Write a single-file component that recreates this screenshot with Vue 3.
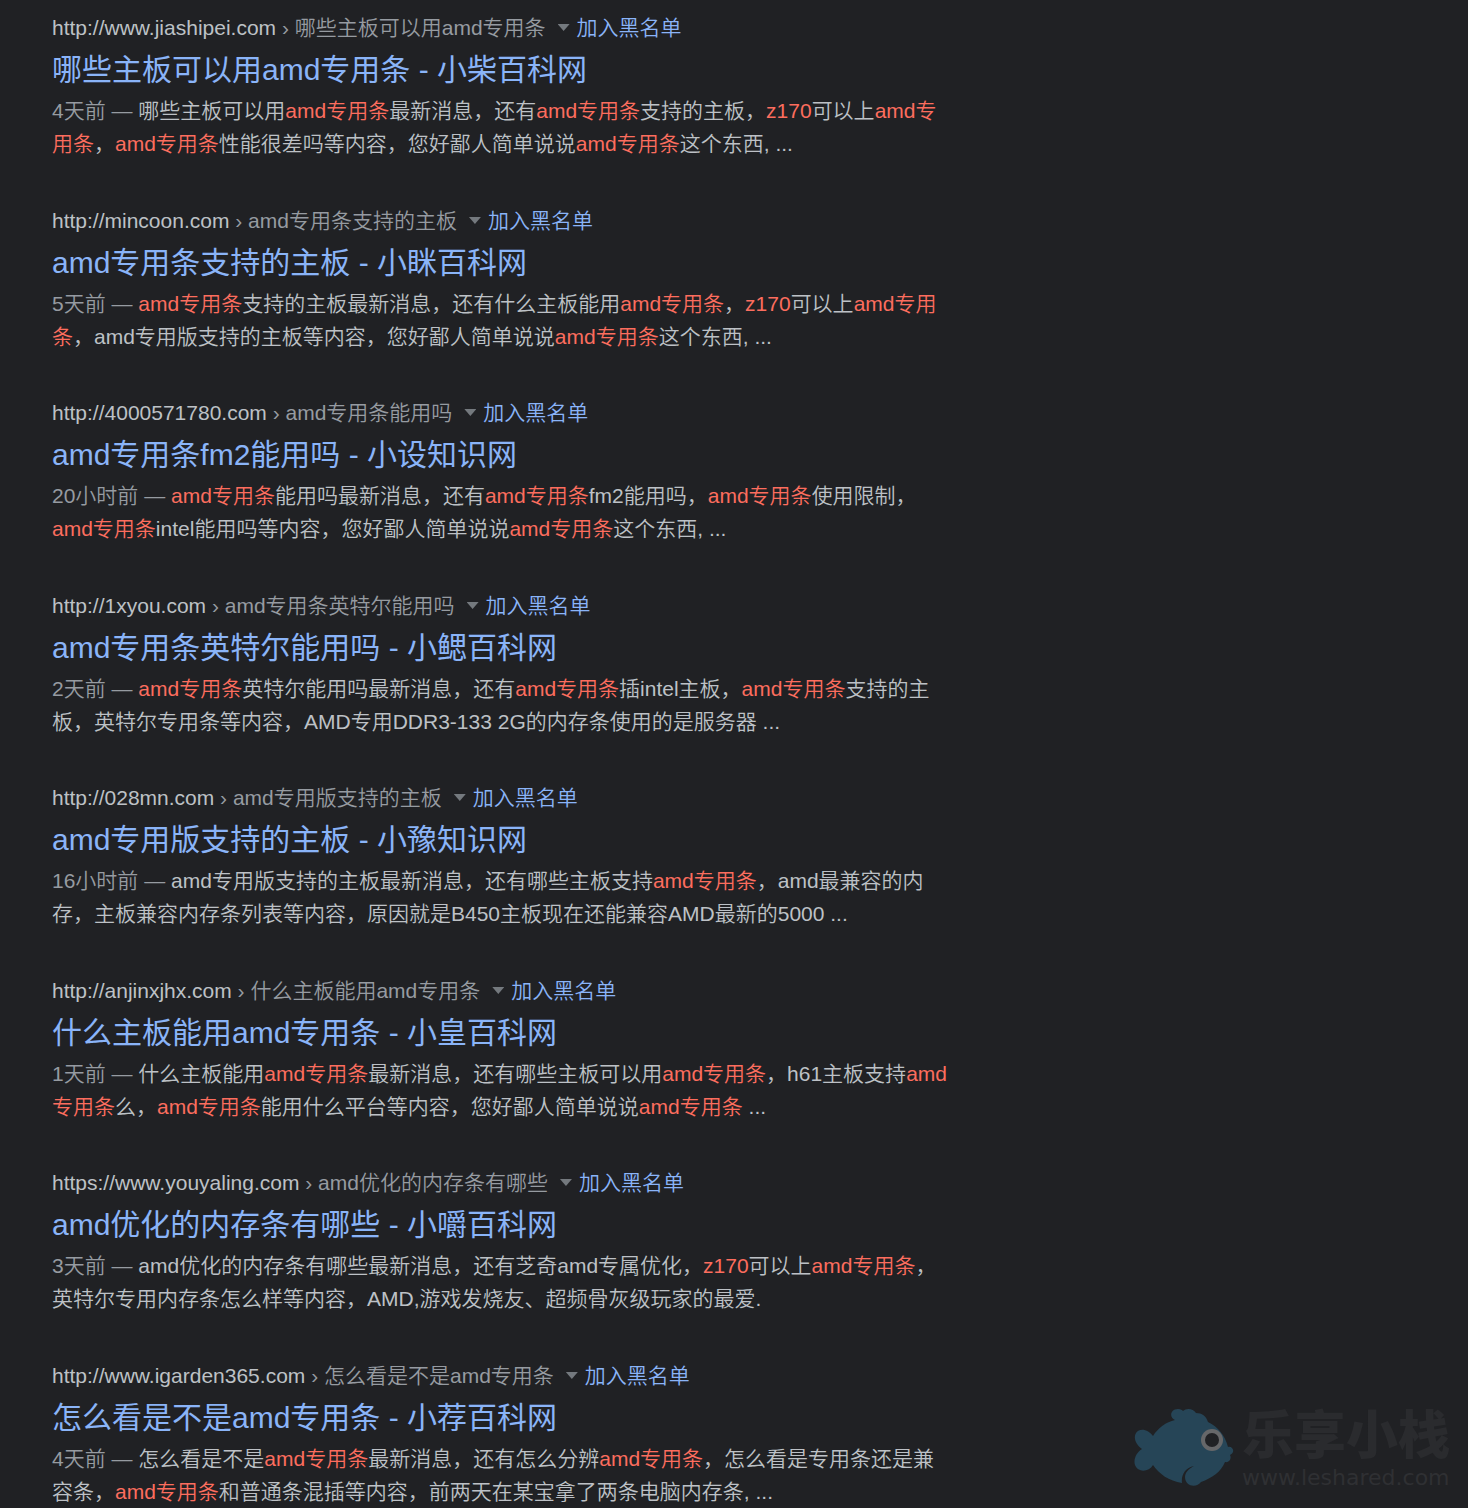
<script setup>
const results = [
  {
    site: 'http://www.jiashipei.com',
    crumb: '哪些主板可以用amd专用条',
    title: '哪些主板可以用amd专用条 - 小柴百科网',
    age: '4天前',
    text: '哪些主板可以用*amd专用条*最新消息，还有*amd专用条*支持的主板，*z170*可以上*amd专用条*，*amd专用条*性能很差吗等内容，您好鄙人简单说说*amd专用条*这个东西, ...'
  },
  {
    site: 'http://mincoon.com',
    crumb: 'amd专用条支持的主板',
    title: 'amd专用条支持的主板 - 小眯百科网',
    age: '5天前',
    text: '*amd专用条*支持的主板最新消息，还有什么主板能用*amd专用条*，*z170*可以上*amd专用条*，amd专用版支持的主板等内容，您好鄙人简单说说*amd专用条*这个东西, ...'
  },
  {
    site: 'http://4000571780.com',
    crumb: 'amd专用条能用吗',
    title: 'amd专用条fm2能用吗 - 小设知识网',
    age: '20小时前',
    text: '*amd专用条*能用吗最新消息，还有*amd专用条*fm2能用吗，*amd专用条*使用限制，*amd专用条*intel能用吗等内容，您好鄙人简单说说*amd专用条*这个东西, ...'
  },
  {
    site: 'http://1xyou.com',
    crumb: 'amd专用条英特尔能用吗',
    title: 'amd专用条英特尔能用吗 - 小鳃百科网',
    age: '2天前',
    text: '*amd专用条*英特尔能用吗最新消息，还有*amd专用条*插intel主板，*amd专用条*支持的主板，英特尔专用条等内容，AMD专用DDR3-133 2G的内存条使用的是服务器 ...'
  },
  {
    site: 'http://028mn.com',
    crumb: 'amd专用版支持的主板',
    title: 'amd专用版支持的主板 - 小豫知识网',
    age: '16小时前',
    text: 'amd专用版支持的主板最新消息，还有哪些主板支持*amd专用条*，amd最兼容的内存，主板兼容内存条列表等内容，原因就是B450主板现在还能兼容AMD最新的5000 ...'
  },
  {
    site: 'http://anjinxjhx.com',
    crumb: '什么主板能用amd专用条',
    title: '什么主板能用amd专用条 - 小皇百科网',
    age: '1天前',
    text: '什么主板能用*amd专用条*最新消息，还有哪些主板可以用*amd专用条*，h61主板支持*amd专用条*么，*amd专用条*能用什么平台等内容，您好鄙人简单说说*amd专用条* ...'
  },
  {
    site: 'https://www.youyaling.com',
    crumb: 'amd优化的内存条有哪些',
    title: 'amd优化的内存条有哪些 - 小嚼百科网',
    age: '3天前',
    text: 'amd优化的内存条有哪些最新消息，还有芝奇amd专属优化，*z170*可以上*amd专用条*，英特尔专用内存条怎么样等内容，AMD,游戏发烧友、超频骨灰级玩家的最爱.'
  },
  {
    site: 'http://www.igarden365.com',
    crumb: '怎么看是不是amd专用条',
    title: '怎么看是不是amd专用条 - 小荐百科网',
    age: '4天前',
    text: '怎么看是不是*amd专用条*最新消息，还有怎么分辨*amd专用条*，怎么看是专用条还是兼容条，*amd专用条*和普通条混插等内容，前两天在某宝拿了两条电脑内存条, ...'
  }
]

// Odd segments between asterisks are the highlighted search terms.
const segments = (text) => text.split('*')
</script>

<template>
  <main class="page" lang="zh-CN">
    <article v-for="r in results" :key="r.site" class="result">
      <div class="source">
        <cite class="cite">{{ r.site }}<span class="crumb"> › {{ r.crumb }}</span></cite>
        <button class="more" type="button" aria-label="更多选项"></button>
        <a class="block" href="#">加入黑名单</a>
      </div>
      <h3 class="title"><a href="#">{{ r.title }}</a></h3>
      <p class="snippet"><span class="age">{{ r.age }} — </span><template v-for="(s, i) in segments(r.text)" :key="i"><em v-if="i % 2">{{ s }}</em><template v-else>{{ s }}</template></template></p>
    </article>

    <aside class="brand">
      <svg class="fish" width="100" height="80" viewBox="0 0 100 80" aria-hidden="true">
        <g fill="#264557">
          <path d="M19 28C24 20 32 14 41 12C35 10 36 1 44 1C47 1 48 2 49 3C52 0 59 0 62 5C68 5 72 8 74 14C84 19 91 27 94 39C97 38 100 41 99 44C98 46 97 46 96 47C98 51 95 55 91 54C87 64 78 70 67 74C63 80 51 79 51 69C51 65 54 61 60 58C51 60 47 67 48 75C35 73 25 66 19 57C15 64 4 65 1 57C-1 51 3 44 8 41C2 37 -1 30 2 25C6 19 15 22 19 28Z" />
        </g>
        <circle cx="78" cy="32" r="11" fill="#666769" />
        <circle cx="78" cy="32" r="7" fill="#202124" />
      </svg>
      <div class="words">
        <span class="name">乐享小栈</span>
        <span class="domain">www.leshared.com</span>
      </div>
    </aside>
  </main>
</template>

<style>
body {
  margin: 0;
  background: #202124;
}
</style>

<style scoped>
.page {
  position: relative;
  padding: 11px 52px 0;
  color: #bdc1c6;
  background: #202124;
  font-family: "Liberation Sans", "Noto Sans CJK SC", sans-serif;
  font-size: 21px;
  font-weight: 350;
  line-height: 33px;
}
.result {
  max-width: 900px;
  margin-bottom: 44px;
}
.result:nth-child(even) {
  margin-bottom: 43px;
}
.result:nth-last-child(2) {
  margin-bottom: 0;
}
.source {
  display: flex;
  align-items: center;
  height: 33px;
  padding-bottom: 1px;
  white-space: nowrap;
}
.cite {
  font-style: normal;
}
.crumb,
.age {
  color: #969ba1;
}
.more {
  width: 12px;
  height: 7px;
  margin: 0 7px 0 12px;
  padding: 0;
  border: 0;
  background: #74797e;
  clip-path: polygon(0 0, 100% 0, 50% 100%);
}
a {
  color: #8ab4f8;
  text-decoration: none;
}
.title {
  margin: 0;
  font-size: 30px;
  font-weight: 400;
  line-height: 49px;
}
.snippet {
  margin: 0;
}
em {
  color: #fc6d5e;
  font-style: normal;
}
.brand {
  position: absolute;
  right: 16px;
  bottom: 18px;
  display: flex;
  align-items: center;
  gap: 8px;
  color: #2a2b2e;
}
.fish {
  display: block;
}
.words {
  display: flex;
  flex-direction: column;
  width: 210px;
}
.name {
  font-size: 52px;
  font-weight: 900;
  line-height: 60px;
}
.domain {
  color: #2f3033;
  font-family: "DejaVu Sans", sans-serif;
  font-size: 22px;
  font-weight: 400;
  line-height: 24px;
}
</style>
